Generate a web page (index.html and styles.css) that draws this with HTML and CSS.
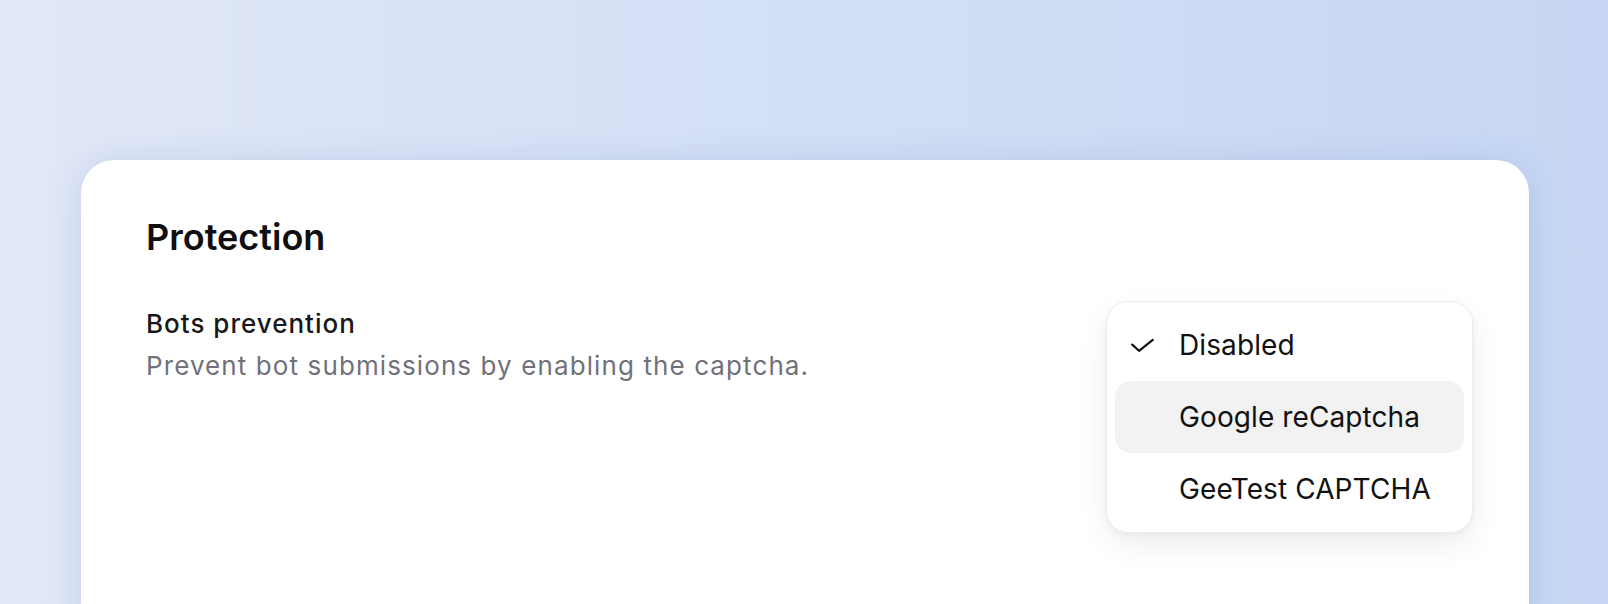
FILE: index.html
```html
<!DOCTYPE html>
<html lang="en">
<head>
<meta charset="utf-8">
<title>Protection</title>
<link rel="stylesheet" href="styles.css">
</head>
<body>
<div class="page">
  <section class="card">
    <h2 class="title">Protection</h2>
    <div class="setting">
      <div class="setting-text">
        <div class="label">Bots prevention</div>
        <div class="desc">Prevent bot submissions by enabling the captcha.</div>
      </div>
      <div class="menu">
        <div class="item">
          <span class="check"><svg width="25" height="15" viewBox="0 0 25 15"><polyline points="2.2,6.6 9,12.8 22.8,1.8" fill="none" stroke="#111" stroke-width="2.2" stroke-linecap="round" stroke-linejoin="round"/></svg></span>
          <span class="item-label">Disabled</span>
        </div>
        <div class="item active">
          <span class="check"></span>
          <span class="item-label">Google reCaptcha</span>
        </div>
        <div class="item">
          <span class="check"></span>
          <span class="item-label">GeeTest CAPTCHA</span>
        </div>
      </div>
    </div>
  </section>
</div>
</body>
</html>
```
FILE: styles.css
```css
html, body {
  margin: 0;
  height: 100%;
}
body {
  overflow: hidden;
  font-family: "Inter", "Liberation Sans", sans-serif;
  background: linear-gradient(90deg, #e1e8f7 0%, #d4e0f6 45%, #c7d7f3 100%);
}
.page {
  padding: 160px 79px 0 81px;
}
.card {
  background: #fff;
  border-radius: 33px;
  min-height: 520px;
  box-shadow: 0 4px 36px rgba(50, 80, 160, 0.16);
  padding: 56px 56px 0 65px;
  box-sizing: border-box;
}
.title {
  margin: 0;
  font-size: 36px;
  line-height: 42px;
  font-weight: 600;
  color: #0f0f10;
}
.setting {
  display: flex;
  justify-content: space-between;
  align-items: flex-start;
  margin-top: 43px;
}
.setting-text {
  padding-top: 6px;
}
.label {
  font-size: 26px;
  line-height: 33px;
  font-weight: 500;
  letter-spacing: 1px;
  color: #18181b;
}
.desc {
  margin-top: 9px;
  font-size: 26px;
  line-height: 33px;
  letter-spacing: 1.1px;
  color: #71717a;
}
.menu {
  width: 367px;
  box-sizing: border-box;
  padding: 7px 8px;
  border: 1px solid #ececec;
  border-radius: 22px;
  background: #fff;
  box-shadow: 0 12px 30px rgba(0, 0, 0, 0.07), 0 2px 6px rgba(0, 0, 0, 0.04);
}
.item {
  display: flex;
  align-items: center;
  height: 72px;
  padding-left: 15px;
  border-radius: 16px;
  font-size: 28px;
  letter-spacing: 0.1px;
  color: #111;
}
.item.active {
  background: #f2f2f2;
}
.check {
  width: 25px;
  height: 15px;
  margin-right: 24px;
  display: flex;
  margin-top: 1px;
}
.item-label {
  line-height: 72px;
}
```
